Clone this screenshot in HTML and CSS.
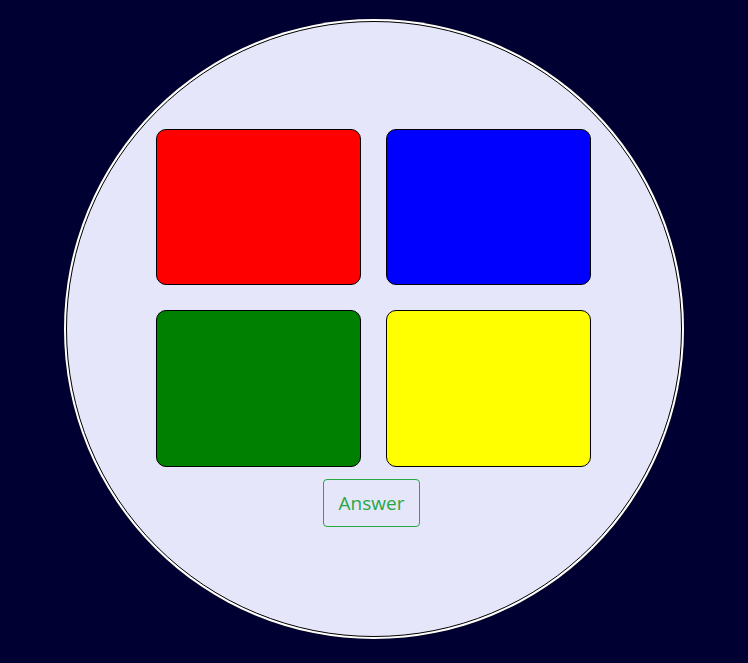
FILE: index.html
```html
<!DOCTYPE html>
<html lang="en">
<head>
<meta charset="utf-8">
<title>Colors</title>
<link rel="stylesheet" href="styles.css">
</head>
<body>
<div class="stage">
  <div class="circle">
    <div class="tiles">
      <div class="tile tile-red"></div>
      <div class="tile tile-blue"></div>
      <div class="tile tile-green"></div>
      <div class="tile tile-yellow"></div>
    </div>
    <div class="actions">
      <button class="answer-btn" type="button">Answer</button>
    </div>
  </div>
</div>
</body>
</html>
```
FILE: styles.css
```css
html, body {
  margin: 0;
  padding: 0;
  background: #000033;
  height: 100%;
}
body {
  font-family: "Open Sans", "Noto Sans", "Liberation Sans", sans-serif;
}
.stage {
  display: flex;
  justify-content: center;
  padding-top: 21px;
}
.circle {
  box-sizing: border-box;
  width: 616px;
  height: 616px;
  border-radius: 50%;
  background: #e6e6fa;
  border: 1px solid #000;
  box-shadow: 0 0 0 2px #ffffff, 0 0 0 2.6px rgba(0, 0, 0, 0.4);
  padding-top: 107px;
  display: flex;
  flex-direction: column;
  align-items: center;
}
.tiles {
  display: grid;
  grid-template-columns: 205px 205px;
  grid-template-rows: 156px 157px;
  gap: 25px;
  margin-left: -2px;
}
.tile {
  box-sizing: border-box;
  border: 1px solid #000;
  border-radius: 10px;
}
.tile-red { background: #ff0000; }
.tile-blue { background: #0000ff; }
.tile-green { background: #008000; }
.tile-yellow { background: #ffff00; }
.actions {
  margin-top: 12px;
  display: flex;
  justify-content: center;
  margin-left: -5px;
}
.answer-btn {
  font-family: "Open Sans", "Noto Sans", sans-serif;
  font-size: 19px;
  line-height: 30px;
  padding: 8px 15px;
  color: #28a745;
  background: transparent;
  border: 1px solid #28a745;
  border-radius: 4px;
  cursor: pointer;
}
```
